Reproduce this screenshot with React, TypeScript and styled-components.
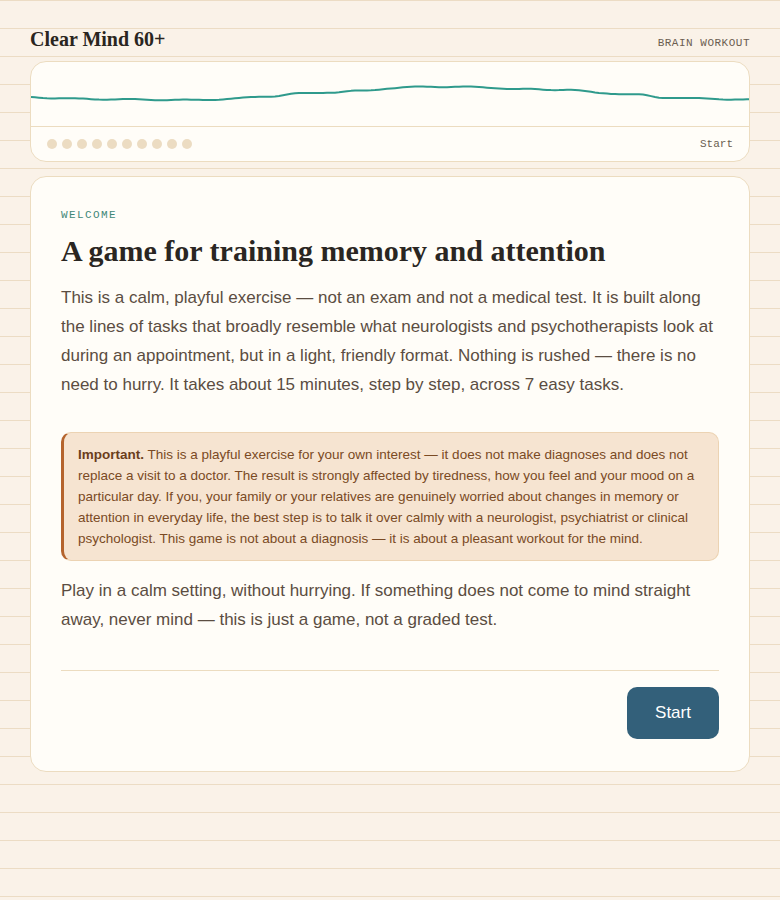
import React from "react";
import styled, { createGlobalStyle } from "styled-components";

const GlobalStyle = createGlobalStyle`
  html, body { margin: 0; padding: 0; }
  body {
    background-color: #faf2e8;
    background-image: repeating-linear-gradient(
      to bottom,
      #ecdcc4 0px,
      #ecdcc4 1.5px,
      transparent 1.5px,
      transparent 28px
    );
    min-height: 900px;
    font-family: "Liberation Sans", Arial, sans-serif;
  }
`;

const Page = styled.div`
  padding: 28px 30px 40px;
  display: flex;
  flex-direction: column;
`;

const Header = styled.header`
  display: flex;
  justify-content: space-between;
  align-items: baseline;
  margin-bottom: 11px;
`;

const Brand = styled.h1`
  margin: 0;
  font-family: "Liberation Serif", "Times New Roman", serif;
  font-weight: 700;
  font-size: 20px;
  line-height: 22px;
  color: #2a2520;
`;

const Tag = styled.span`
  font-family: "Liberation Mono", "Courier New", monospace;
  font-size: 11px;
  letter-spacing: 0.5px;
  color: #6b5d50;
`;

const Card = styled.section`
  background: #fffdf8;
  border: 1px solid #ecdcc0;
  border-radius: 16px;
  overflow: hidden;
`;

const WaveCard = styled(Card)`
  margin-bottom: 14px;
`;

const WaveArea = styled.div`
  height: 64px;
  border-bottom: 1px solid #ecdcc0;
  display: flex;
`;

const WaveFooter = styled.div`
  height: 34px;
  padding: 0 16px;
  display: flex;
  align-items: center;
  justify-content: space-between;
`;

const Dots = styled.div`
  display: flex;
  gap: 5px;
`;

const Dot = styled.span`
  width: 10px;
  height: 10px;
  border-radius: 50%;
  background: #ecdcc2;
`;

const StepLabel = styled.span`
  font-family: "Liberation Mono", "Courier New", monospace;
  font-size: 11px;
  color: #6b5d50;
`;

const MainCard = styled(Card)`
  padding: 30px 30px 32px;
  display: flex;
  flex-direction: column;
`;

const Eyebrow = styled.div`
  font-family: "Liberation Mono", "Courier New", monospace;
  font-size: 11px;
  line-height: 16px;
  letter-spacing: 1.4px;
  color: #3f8878;
  margin-bottom: 10px;
`;

const Title = styled.h2`
  margin: 0 0 14px;
  font-family: "Liberation Serif", "Times New Roman", serif;
  font-weight: 700;
  font-size: 30px;
  line-height: 36px;
  color: #2a2622;
`;

const Para = styled.p<{ $mb?: number }>`
  margin: 0 0 ${(p) => p.$mb ?? 0}px;
  font-size: 17px;
  line-height: 29px;
  color: #5b4d42;
`;

const Callout = styled.div`
  margin-bottom: 15px;
  padding: 11px 16px 11px 14px;
  background: #f6e4d1;
  border: 1px solid #ecd3b3;
  border-left: 3px solid #b5642d;
  border-radius: 10px;
  font-size: 13.5px;
  line-height: 21px;
  color: #7a4a24;

  strong {
    color: #6b3d1c;
  }
`;

const Divider = styled.hr`
  margin: 36px 0 16px;
  border: 0;
  border-top: 1px solid #ecdcc0;
`;

const Actions = styled.div`
  display: flex;
  justify-content: flex-end;
`;

const Button = styled.button`
  width: 92px;
  height: 52px;
  border: 0;
  border-radius: 10px;
  background: #33607a;
  color: #ffffff;
  font-family: "Liberation Sans", Arial, sans-serif;
  font-size: 17px;
  cursor: pointer;
`;

const basePoints: [number, number][] = [
  [0, 35],
  [50, 36.5],
  [100, 38],
  [150, 38],
  [200, 36.5],
  [240, 34.5],
  [270, 32],
  [300, 30],
  [330, 28.5],
  [360, 26],
  [410, 25],
  [460, 25],
  [490, 27],
  [530, 28],
  [570, 31],
  [610, 32.5],
  [630, 35],
  [670, 37],
  [720, 38],
];

function baseY(x: number): number {
  for (let i = 0; i < basePoints.length - 1; i++) {
    const [x0, y0] = basePoints[i];
    const [x1, y1] = basePoints[i + 1];
    if (x >= x0 && x <= x1) {
      const t = (x - x0) / (x1 - x0);
      const s = t * t * (3 - 2 * t);
      return y0 + (y1 - y0) * s;
    }
  }
  return basePoints[basePoints.length - 1][1];
}

function wavePath(): string {
  const parts: string[] = [];
  for (let x = 0; x <= 720; x += 4) {
    const y = baseY(x) + Math.sin(x / 9) * 0.6 + Math.sin(x / 23) * 0.5;
    parts.push(`${x === 0 ? "M" : "L"}${x},${y.toFixed(2)}`);
  }
  return parts.join(" ");
}

const Wave: React.FC = () => (
  <svg width="100%" height="64" viewBox="0 0 718 64" preserveAspectRatio="none">
    <path d={wavePath()} fill="none" stroke="#2f9a8c" strokeWidth={2} strokeLinejoin="round" />
  </svg>
);

export default function App() {
  return (
    <>
      <GlobalStyle />
      <Page>
        <Header>
          <Brand>Clear Mind 60+</Brand>
          <Tag>BRAIN WORKOUT</Tag>
        </Header>

        <WaveCard>
          <WaveArea>
            <Wave />
          </WaveArea>
          <WaveFooter>
            <Dots>
              {Array.from({ length: 10 }).map((_, i) => (
                <Dot key={i} />
              ))}
            </Dots>
            <StepLabel>Start</StepLabel>
          </WaveFooter>
        </WaveCard>

        <MainCard>
          <Eyebrow>WELCOME</Eyebrow>
          <Title>A game for training memory and attention</Title>
          <Para $mb={33}>
            This is a calm, playful exercise — not an exam and not a medical test. It is built along
            the lines of tasks that broadly resemble what neurologists and psychotherapists look at
            during an appointment, but in a light, friendly format. Nothing is rushed — there is no
            need to hurry. It takes about 15 minutes, step by step, across 7 easy tasks.
          </Para>
          <Callout>
            <strong>Important.</strong> This is a playful exercise for your own interest — it does
            not make diagnoses and does not replace a visit to a doctor. The result is strongly
            affected by tiredness, how you feel and your mood on a particular day. If you, your
            family or your relatives are genuinely worried about changes in memory or attention in
            everyday life, the best step is to talk it over calmly with a neurologist, psychiatrist
            or clinical psychologist. This game is not about a diagnosis — it is about a pleasant
            workout for the mind.
          </Callout>
          <Para>
            Play in a calm setting, without hurrying. If something does not come to mind straight
            away, never mind — this is just a game, not a graded test.
          </Para>
          <Divider />
          <Actions>
            <Button>Start</Button>
          </Actions>
        </MainCard>
      </Page>
    </>
  );
}
